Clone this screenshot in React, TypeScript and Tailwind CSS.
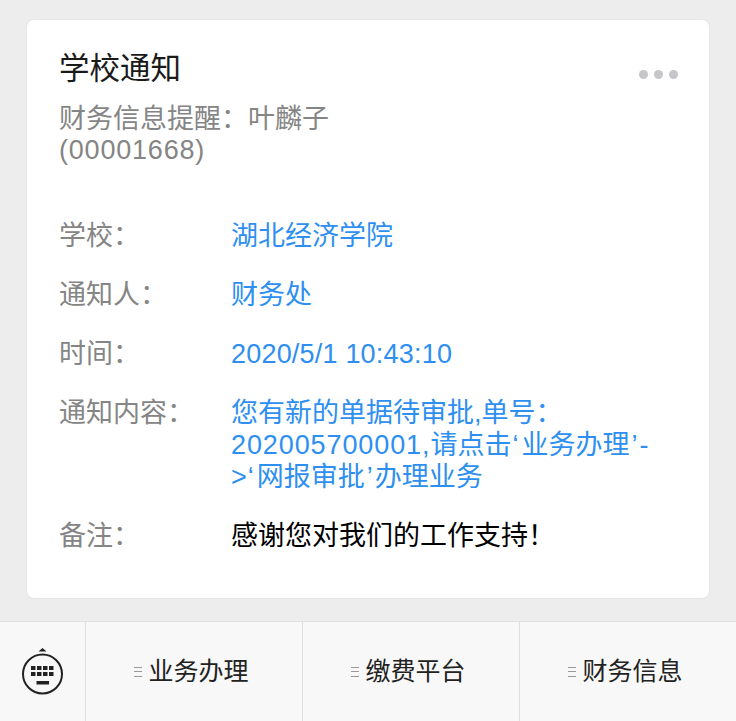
const font = { fontFamily: '"Liberation Sans", "Noto Sans CJK SC", sans-serif' };

function Row({ label, children, color = "text-[#2e8ff0]" }: { label: string; children: React.ReactNode; color?: string }) {
  return (
    <div className="flex mb-[27px] text-[27px] leading-[32px]">
      <div className="w-[172px] shrink-0 text-[#858585]">{label}</div>
      <div className={`flex-1 ${color}`}>{children}</div>
    </div>
  );
}

function Q({ children, left }: { children: string; left?: boolean }) {
  return <span className={left ? "ml-[1px] mr-[3px]" : "ml-[2px] mr-[2px]"}>{children}</span>;
}

function MenuItem({ text }: { text: string }) {
  return (
    <div className="flex-1 h-full border-l border-[#dfdfdf] flex items-center justify-center text-[25px] text-[#222] pr-[5px]">
      <span className="w-[8px] h-[10px] mr-[6px] flex flex-col justify-between">
        <span className="h-px bg-[#999]" />
        <span className="h-px bg-[#999]" />
        <span className="h-px bg-[#999]" />
      </span>
      {text}
    </div>
  );
}

export default function App() {
  return (
    <div style={font} className="w-[736px] h-[721px] bg-[#ededed] flex flex-col overflow-hidden">
      <div className="flex-1 px-[26px] pt-[19px]">
        <div className="relative h-[580px] bg-white rounded-[8px] border border-[#e6e6e6] pl-[32px] pr-[30px] pt-[28px]">
          <div className="text-[30.5px] leading-[40px] text-[#1a1a1a]">学校通知</div>
          <div className="mt-[16px] w-[290px] text-[27px] leading-[31px] text-[#858585]">
            财务信息提醒：叶麟子<span className="tracking-[0.8px]">(00001668)</span>
          </div>
          <div className="absolute right-[31px] top-[50px] flex gap-[6px]">
            <span className="w-[9px] h-[9px] rounded-full bg-[#c5c5ca]" />
            <span className="w-[9px] h-[9px] rounded-full bg-[#c5c5ca]" />
            <span className="w-[9px] h-[9px] rounded-full bg-[#c5c5ca]" />
          </div>
          <div className="mt-[54px]">
            <Row label="学校：">湖北经济学院</Row>
            <Row label="通知人：">财务处</Row>
            <Row label="时间：">
              <span className="tracking-[0.2px]">2020/5/1 10:43:10</span>
            </Row>
            <Row label="通知内容：">
              您有新的单据待审批,单号：
              <span className="tracking-[0.9px]">202005700001,</span>请点击<Q left>‘</Q>业务办理<Q>’</Q>-
              <br />
              &gt;<Q left>‘</Q>网报审批<Q>’</Q>办理业务
            </Row>
            <Row label="备注：" color="text-black">感谢您对我们的工作支持！</Row>
          </div>
        </div>
      </div>
      <div className="h-[100px] bg-[#f8f8f8] border-t border-[#dfdfdf] flex items-center">
        <div className="w-[85px] h-full flex items-center justify-center shrink-0">
          <svg width="44" height="50" viewBox="0 0 44 50" fill="none">
            <path d="M17.5 4.5 L21.5 1 L25.5 4.5 Z" fill="#222" />
            <circle cx="21.5" cy="27" r="19.5" stroke="#222" strokeWidth="2" />
            <g fill="#222">
              <rect x="10" y="19" width="4.5" height="4" /><rect x="16" y="19" width="4.5" height="4" /><rect x="22" y="19" width="4.5" height="4" /><rect x="28" y="19" width="4.5" height="4" />
              <rect x="10" y="25" width="4.5" height="4" /><rect x="16" y="25" width="4.5" height="4" /><rect x="22" y="25" width="4.5" height="4" /><rect x="28" y="25" width="4.5" height="4" />
              <rect x="15.5" y="34" width="12.5" height="3.5" />
            </g>
          </svg>
        </div>
        <MenuItem text="业务办理" />
        <MenuItem text="缴费平台" />
        <MenuItem text="财务信息" />
      </div>
    </div>
  );
}
